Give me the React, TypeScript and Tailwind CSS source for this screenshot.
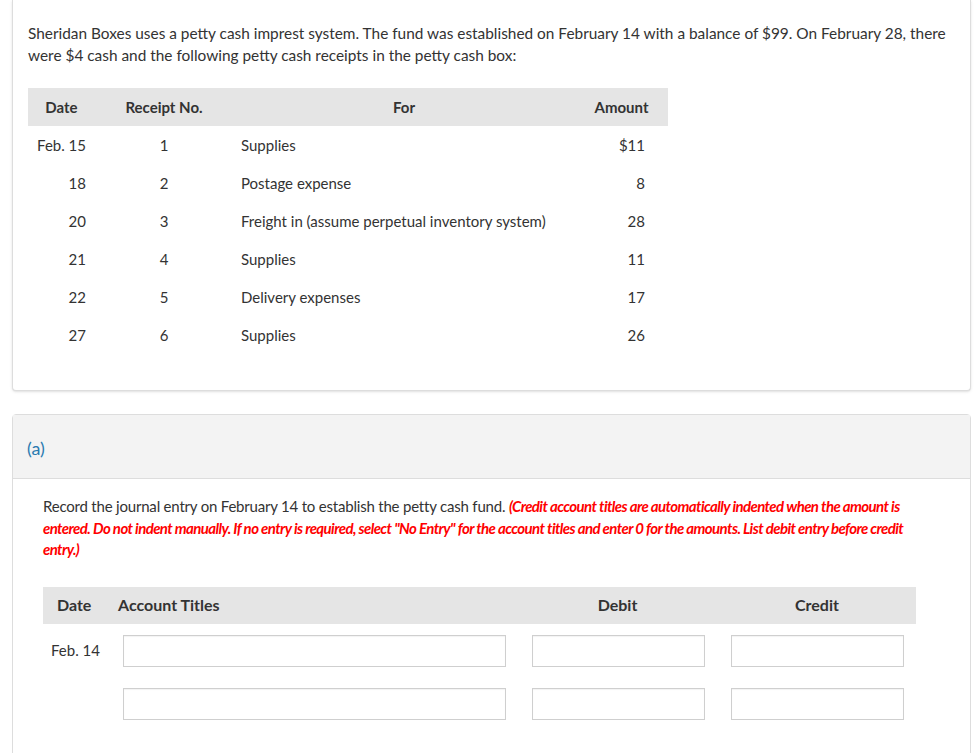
const rows = [
  ['Feb. 15', '1', 'Supplies', '$11'],
  ['18', '2', 'Postage expense', '8'],
  ['20', '3', 'Freight in (assume perpetual inventory system)', '28'],
  ['21', '4', 'Supplies', '11'],
  ['22', '5', 'Delivery expenses', '17'],
  ['27', '6', 'Supplies', '26'],
]

function Box({ w }: { w: string }) {
  return <div className={`h-[32px] ${w} border border-[#cfcfcf] bg-white shadow-[inset_0_1px_1px_rgba(0,0,0,0.05)]`} />
}

export default function App() {
  return (
    <div className="min-h-[753px] bg-white text-[15px] text-[#333] pl-[12px] pr-[6px]" style={{ fontFamily: 'Lato, "Liberation Sans", sans-serif' }}>
      <div className="border border-t-0 border-[#ddd] rounded-b shadow-sm bg-white pt-[22px] pb-[32px] px-[15px] h-[391px]">
        <p className="leading-[22px] text-[15.4px]">
          Sheridan Boxes uses a petty cash imprest system. The fund was established on February 14 with a balance of $99. On February 28,
          there were $4 cash and the following petty cash receipts in the petty cash box:
        </p>
        <div className="mt-[22px] w-[640px]">
          <div className="flex h-[38px] items-center bg-[#e5e5e5] font-bold">
            <div className="w-[67px] text-center">Date</div>
            <div className="w-[138px] text-center">Receipt No.</div>
            <div className="w-[342px] text-center">For</div>
            <div className="w-[93px] text-center">Amount</div>
          </div>
          {rows.map((r) => (
            <div key={r[1]} className="flex h-[38px] items-center">
              <div className="w-[67px] text-right pr-[9px]">{r[0]}</div>
              <div className="w-[138px] text-center">{r[1]}</div>
              <div className="w-[342px] pl-[8px]">{r[2]}</div>
              <div className="w-[70px] text-right">{r[3]}</div>
            </div>
          ))}
        </div>
      </div>
      <div className="mt-[23px] border border-[#ddd] rounded-t">
        <div className="h-[64px] bg-[#f3f3f3] border-b border-[#ddd] flex items-center pl-[14px] pt-[4px]">
          <span className="text-[18px] text-[#2a7ab0]">(a)</span>
        </div>
        <div className="px-[30px] pt-[17px] pb-[40px]">
          <p className="leading-[21.5px] text-[15px] tracking-[-0.2px]">
            Record the journal entry on February 14 to establish the petty cash fund.{' '}
            <span className="text-[#f00] italic font-bold tracking-[-0.6px]">
              (Credit account titles are automatically indented when the amount is entered. Do not indent manually. If no entry is required, select "No Entry" for the account titles and enter 0 for the amounts. List debit entry before credit entry.)
            </span>
          </p>
          <div className="mt-[26px] w-[873px]">
            <div className="flex h-[37px] items-center bg-[#e5e5e5] font-bold text-[16px]">
              <div className="w-[75px] pl-[14px]">Date</div>
              <div className="w-[412px]">Account Titles</div>
              <div className="w-[175px] text-center">Debit</div>
              <div className="w-[200px] text-center pl-[24px]">Credit</div>
            </div>
            <div className="flex items-center mt-[11px] h-[32px]">
              <div className="w-[80px] pl-[8px]">Feb. 14</div>
              <Box w="w-[383px]" />
              <div className="w-[26px]" />
              <Box w="w-[173px]" />
              <div className="w-[26px]" />
              <Box w="w-[173px]" />
            </div>
            <div className="flex items-center mt-[21px] h-[32px]">
              <div className="w-[80px]" />
              <Box w="w-[383px]" />
              <div className="w-[26px]" />
              <Box w="w-[173px]" />
              <div className="w-[26px]" />
              <Box w="w-[173px]" />
            </div>
          </div>
        </div>
      </div>
    </div>
  )
}
